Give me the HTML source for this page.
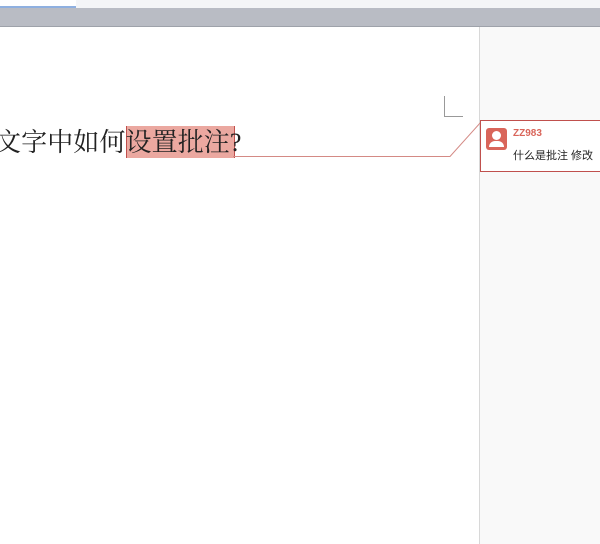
<!DOCTYPE html>
<html><head><meta charset="utf-8"><style>
body{margin:0;width:600px;height:544px;overflow:hidden;background:#fff;position:relative;font-family:"Liberation Sans","Noto Sans CJK SC",sans-serif}
.a{position:absolute}
</style></head><body>
<div class="a" style="left:0;top:0;width:600px;height:8px;background:#f4f5f7"></div>
<div class="a" style="left:0;top:0;width:76px;height:6px;background:#fff;border-bottom:2px solid #8fb0e0"></div>
<div class="a" style="left:0;top:8px;width:600px;height:18px;background:#b9bcc4"></div>
<div class="a" style="left:0;top:26px;width:600px;height:1px;background:#9ea2aa"></div>
<div class="a" style="left:479px;top:27px;width:121px;height:517px;background:#f9f9f9;border-left:1px solid #d8d8d8"></div>
<div class="a" style="left:444px;top:96px;width:18px;height:20px;border-left:1px solid #999;border-bottom:1px solid #999"></div>
<div class="a" style="left:126px;top:126px;width:107px;height:32px;background:#eba8a0;border-left:1px solid #c0504d;border-right:1px solid #c0504d"></div>
<div class="a" style="left:-5px;top:122px;font-family:'Liberation Serif','Noto Serif CJK SC',serif;font-size:26px;color:#222;white-space:nowrap;letter-spacing:0.1px">文字中如何设置批注?</div>
<svg class="a" style="left:0;top:0" width="600" height="544"><polyline points="233,156.5 450,156.5 481,122" fill="none" stroke="#d48a85" stroke-width="1"/></svg>
<div class="a" style="left:480px;top:120px;width:125px;height:50px;background:#fff;border:1px solid #c0504d"></div>
<div class="a" style="left:486px;top:128px;width:21px;height:22px;background:#d9655a;border-radius:3px"></div>
<div class="a" style="left:492px;top:131px;width:9px;height:9px;background:#fff;border-radius:50%"></div>
<div class="a" style="left:489px;top:141px;width:15px;height:6px;background:#fff;border-radius:6px 6px 0 0"></div>
<div class="a" style="left:513px;top:128px;font-size:10px;font-weight:bold;color:#d9655a">ZZ983</div>
<div class="a" style="left:513px;top:147px;font-size:11px;color:#222;white-space:nowrap">什么是批注 修改</div>
</body></html>
